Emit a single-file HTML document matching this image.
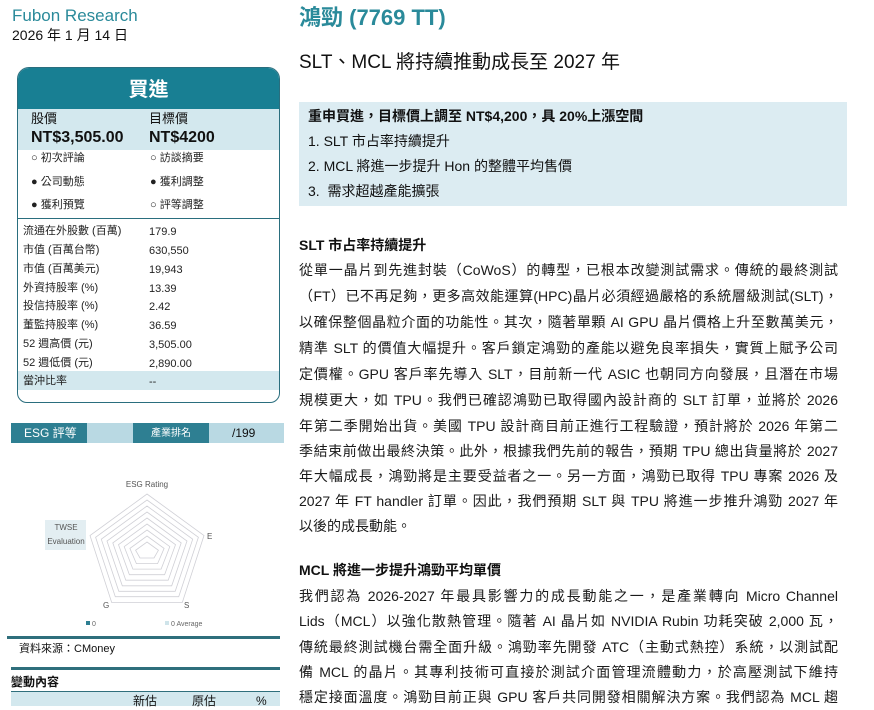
<!DOCTYPE html>
<html><head><meta charset="utf-8"><style>
*{margin:0;padding:0;box-sizing:border-box}
body{width:874px;height:706px;overflow:hidden;background:#fff;font-family:"Liberation Sans","Noto Sans CJK TC",sans-serif;color:#111;position:relative}
.a{position:absolute;white-space:nowrap;line-height:1.2}
.teal{color:#2a8a9a}
.ln{position:absolute;left:299px;width:539px;font-size:14px;line-height:26px;text-align:justify;text-align-last:justify;white-space:nowrap;color:#1a1a1a}
.ll{text-align-last:left}
.t{position:absolute;font-size:11px;white-space:nowrap;color:#222;line-height:14px}
</style></head><body>
<div class="a teal" style="left:12px;top:6px;font-size:17px">Fubon Research</div>
<div class="a" style="left:12px;top:27px;font-size:14px">2026 年 1 月 14 日</div>

<!-- rating box -->
<div style="position:absolute;left:17px;top:67px;width:263px;height:336px;border:1px solid #2a6e7e;border-radius:12px 12px 10px 10px;overflow:hidden">
 <div style="height:41px;background:#187f93;color:#fff;font-weight:bold;font-size:20px;text-align:center;line-height:44px">買進</div>
 <div style="height:41px;background:#d3e8ee;position:relative">
  <div style="position:absolute;left:13px;top:2px;font-size:13px;line-height:16px">股價</div>
  <div style="position:absolute;left:13px;top:19px;font-size:16px;line-height:20px;font-weight:bold;white-space:nowrap">NT$3,505.00</div>
  <div style="position:absolute;left:131px;top:2px;font-size:13px;line-height:16px">目標價</div>
  <div style="position:absolute;left:131px;top:19px;font-size:16px;line-height:20px;font-weight:bold">NT$4200</div>
 </div>
</div>
<div class="t" style="left:31px;top:151px">○ 初次評論</div>
<div class="t" style="left:150px;top:151px">○ 訪談摘要</div>
<div class="t" style="left:31px;top:175px">● 公司動態</div>
<div class="t" style="left:150px;top:175px">● 獲利調整</div>
<div class="t" style="left:31px;top:198px">● 獲利預覽</div>
<div class="t" style="left:150px;top:198px">○ 評等調整</div>
<div style="position:absolute;left:18px;top:218px;width:261px;height:1px;background:#2a6e7e"></div>
<div style="position:absolute;left:18px;top:371px;width:261px;height:19px;background:#d3e8ee"></div>
<div class="t" style="left:23px;top:224px">流通在外股數 (百萬)</div><div class="t" style="left:149px;top:225px">179.9</div>
<div class="t" style="left:23px;top:243px">市值 (百萬台幣)</div><div class="t" style="left:149px;top:244px">630,550</div>
<div class="t" style="left:23px;top:262px">市值 (百萬美元)</div><div class="t" style="left:149px;top:263px">19,943</div>
<div class="t" style="left:23px;top:281px">外資持股率 (%)</div><div class="t" style="left:149px;top:282px">13.39</div>
<div class="t" style="left:23px;top:299px">投信持股率 (%)</div><div class="t" style="left:149px;top:300px">2.42</div>
<div class="t" style="left:23px;top:318px">董監持股率 (%)</div><div class="t" style="left:149px;top:319px">36.59</div>
<div class="t" style="left:23px;top:337px">52 週高價 (元)</div><div class="t" style="left:149px;top:338px">3,505.00</div>
<div class="t" style="left:23px;top:356px">52 週低價 (元)</div><div class="t" style="left:149px;top:357px">2,890.00</div>
<div class="t" style="left:23px;top:374px">當沖比率</div><div class="t" style="left:149px;top:375px">--</div>

<!-- ESG bar -->
<div style="position:absolute;left:11px;top:423px;width:76px;height:20px;background:#2e7f92;color:#fff;font-size:12px;line-height:21px;padding-left:13px">ESG 評等</div>
<div style="position:absolute;left:87px;top:423px;width:46px;height:20px;background:#b9d9e3"></div>
<div style="position:absolute;left:133px;top:423px;width:76px;height:20px;background:#2e7f92;color:#fff;font-size:10px;line-height:21px;text-align:center">產業排名</div>
<div style="position:absolute;left:209px;top:423px;width:75px;height:20px;background:#b9d9e3;font-size:12px;line-height:21px;padding-left:23px">/199</div>

<!-- radar -->
<svg style="position:absolute;left:0;top:460px" width="290" height="180">
 <g fill="none" stroke="#d0d0d6" stroke-width="0.8">
  <polygon points="147,34 204,75.5 182.3,142.5 111.7,142.5 90,75.5"/>
  <polygon points="147,40 198.4,77.3 178.7,136.7 115.3,136.7 95.6,77.3"/>
  <polygon points="147,46 192.7,79.2 175.2,131.3 118.8,131.3 101.3,79.2"/>
  <polygon points="147,52 187,81 171.7,125.8 122.3,125.8 107,81"/>
  <polygon points="147,58 181.2,82.9 168.2,120.2 125.8,120.2 112.8,82.9"/>
  <polygon points="147,64 175.5,84.7 164.6,114.7 129.4,114.7 118.5,84.7"/>
  <polygon points="147,70 169.8,86.6 161.1,109.1 132.9,109.1 124.2,86.6"/>
  <polygon points="147,76 164.1,88.4 157.6,103.6 136.4,103.6 129.9,88.4"/>
  <polygon points="147,82 158.4,90.3 154,98 140,98 135.6,90.3"/>
 </g>
 <text x="147" y="27" font-size="8" text-anchor="middle" fill="#555" font-family="Liberation Sans">ESG Rating</text>
 <rect x="45" y="60" width="41" height="30" fill="#e3eef2"/>
 <text x="66" y="70" font-size="8" text-anchor="middle" fill="#555" font-family="Liberation Sans">TWSE</text>
 <text x="66" y="84" font-size="8" text-anchor="middle" fill="#555" font-family="Liberation Sans">Evaluation</text>
 <text x="207" y="79" font-size="8" fill="#555" font-family="Liberation Sans">E</text>
 <text x="184" y="148" font-size="8" fill="#555" font-family="Liberation Sans">S</text>
 <text x="103" y="148" font-size="8" fill="#555" font-family="Liberation Sans">G</text>
 <rect x="86" y="161" width="4" height="4" fill="#2e7f92"/>
 <text x="92" y="166" font-size="7" fill="#666" font-family="Liberation Sans">0</text>
 <rect x="165" y="161" width="4" height="4" fill="#cfe4ea"/>
 <text x="171" y="166" font-size="7" fill="#666" font-family="Liberation Sans">0 Average</text>
</svg>

<div style="position:absolute;left:7px;top:636px;width:273px;height:3px;background:#2f6f7c"></div>
<div class="a" style="left:19px;top:643px;font-size:11px">資料來源：CMoney</div>
<div style="position:absolute;left:11px;top:667px;width:269px;height:3px;background:#2f6f7c"></div>
<div class="a" style="left:11px;top:675px;font-size:12px;font-weight:bold">變動內容</div>
<div style="position:absolute;left:11px;top:691px;width:269px;height:1px;background:#2f6f7c"></div>
<div style="position:absolute;left:11px;top:692px;width:269px;height:14px;background:#d3e8ee"></div>
<div class="a" style="left:133px;top:694px;font-size:12px">新估</div>
<div class="a" style="left:192px;top:694px;font-size:12px">原估</div>
<div class="a" style="left:256px;top:694px;font-size:12px">%</div>

<!-- right column -->
<div class="a teal" style="left:299px;top:5px;font-size:22px;font-weight:bold">鴻勁&nbsp;(7769 TT)</div>
<div class="a" style="left:299px;top:52px;font-size:19px">SLT、MCL 將持續推動成長至 2027 年</div>
<div style="position:absolute;left:299px;top:102px;width:548px;height:104px;background:#dcecf2"></div>
<div class="a" style="left:308px;top:108px;font-size:14px;font-weight:bold">重申買進，目標價上調至 NT$4,200，具 20%上漲空間</div>
<div class="a" style="left:308px;top:133px;font-size:14px">1. SLT 市占率持續提升</div>
<div class="a" style="left:308px;top:158px;font-size:14px">2. MCL 將進一步提升 Hon 的整體平均售價</div>
<div class="a" style="left:308px;top:183px;font-size:14px">3.&nbsp; 需求超越產能擴張</div>

<div class="a" style="left:299px;top:237px;font-size:14px;font-weight:bold">SLT 市占率持續提升</div>
<div class="ln" style="top:257px">從單一晶片到先進封裝（CoWoS）的轉型，已根本改變測試需求。傳統的最終測試</div>
<div class="ln" style="top:283px">（FT）已不再足夠，更多高效能運算(HPC)晶片必須經過嚴格的系統層級測試(SLT)，</div>
<div class="ln" style="top:309px">以確保整個晶粒介面的功能性。其次，隨著單顆 AI GPU 晶片價格上升至數萬美元，</div>
<div class="ln" style="top:335px">精準 SLT 的價值大幅提升。客戶鎖定鴻勁的產能以避免良率損失，實質上賦予公司</div>
<div class="ln" style="top:361px">定價權。GPU 客戶率先導入 SLT，目前新一代 ASIC 也朝同方向發展，且潛在市場</div>
<div class="ln" style="top:387px">規模更大，如 TPU。我們已確認鴻勁已取得國內設計商的 SLT 訂單，並將於 2026</div>
<div class="ln" style="top:413px">年第二季開始出貨。美國 TPU 設計商目前正進行工程驗證，預計將於 2026 年第二</div>
<div class="ln" style="top:438px">季結束前做出最終決策。此外，根據我們先前的報告，預期 TPU 總出貨量將於 2027</div>
<div class="ln" style="top:463px">年大幅成長，鴻勁將是主要受益者之一。另一方面，鴻勁已取得 TPU 專案 2026 及</div>
<div class="ln" style="top:488px">2027 年 FT handler 訂單。因此，我們預期 SLT 與 TPU 將進一步推升鴻勁 2027 年</div>
<div class="ln ll" style="top:513px">以後的成長動能。</div>

<div class="a" style="left:299px;top:562px;font-size:14px;font-weight:bold">MCL 將進一步提升鴻勁平均單價</div>
<div class="ln" style="top:583px">我們認為 2026-2027 年最具影響力的成長動能之一，是產業轉向 Micro Channel</div>
<div class="ln" style="top:608px">Lids（MCL）以強化散熱管理。隨著 AI 晶片如 NVIDIA Rubin 功耗突破 2,000 瓦，</div>
<div class="ln" style="top:634px">傳統最終測試機台需全面升級。鴻勁率先開發 ATC（主動式熱控）系統，以測試配</div>
<div class="ln" style="top:659px">備 MCL 的晶片。其專利技術可直接於測試介面管理流體動力，於高壓測試下維持</div>
<div class="ln" style="top:684px">穩定接面溫度。鴻勁目前正與 GPU 客戶共同開發相關解決方案。我們認為 MCL 趨</div>
</body></html>
